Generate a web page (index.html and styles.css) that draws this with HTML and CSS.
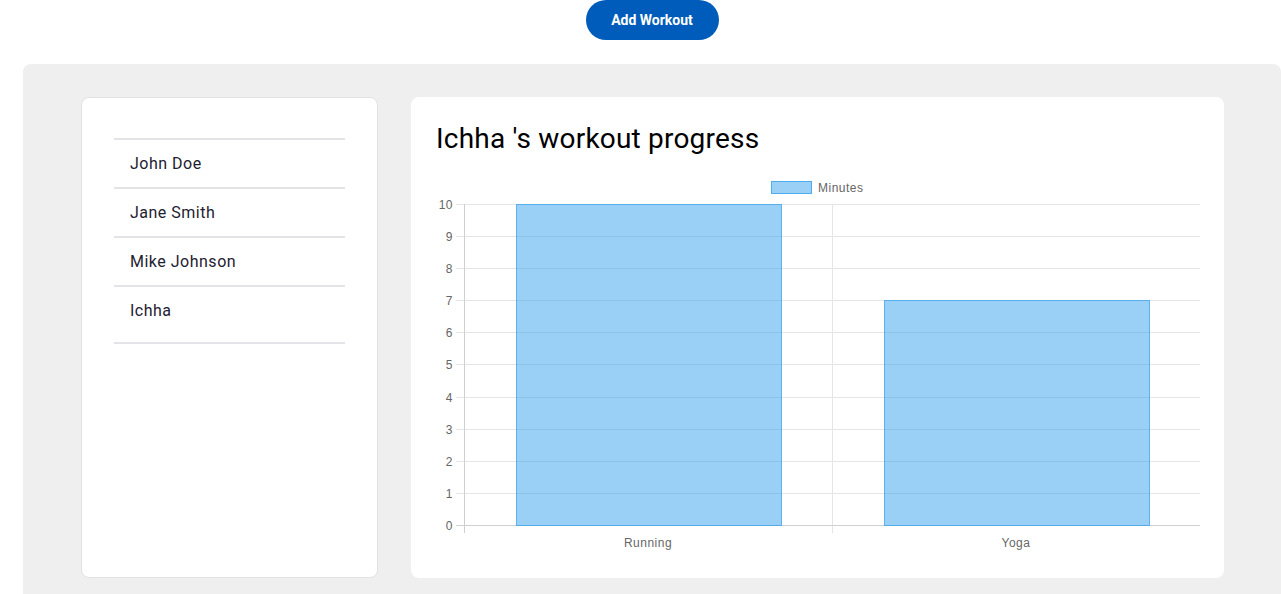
FILE: index.html
```html
<!DOCTYPE html>
<html lang="en">
<head>
<meta charset="utf-8">
<title>Workout Tracker</title>
<link rel="stylesheet" href="styles.css">
</head>
<body>
<div class="top">
  <button class="add-btn">Add Workout</button>
</div>
<main class="panel">
  <aside class="users">
    <ul class="user-list">
      <li>John Doe</li>
      <li>Jane Smith</li>
      <li>Mike Johnson</li>
      <li>Ichha</li>
    </ul>
  </aside>
  <section class="progress">
    <h2 class="title">Ichha 's workout progress</h2>
    <svg class="chart" width="764" height="380" viewBox="0 0 764 380" xmlns="http://www.w3.org/2000/svg">
      <!-- legend -->
      <rect x="335.5" y="6.5" width="40" height="12" fill="rgba(54,162,235,0.5)" stroke="rgba(54,162,235,0.85)" stroke-width="1"/>
      <text class="lbl" x="382" y="16.5">Minutes</text>
      <!-- horizontal grid -->
      <g stroke="#e5e5e5" stroke-width="1">
        <line x1="20" y1="29.5" x2="764" y2="29.5"/>
        <line x1="20" y1="61.5" x2="764" y2="61.5"/>
        <line x1="20" y1="93.5" x2="764" y2="93.5"/>
        <line x1="20" y1="125.5" x2="764" y2="125.5"/>
        <line x1="20" y1="157.5" x2="764" y2="157.5"/>
        <line x1="20" y1="189.5" x2="764" y2="189.5"/>
        <line x1="20" y1="222.5" x2="764" y2="222.5"/>
        <line x1="20" y1="254.5" x2="764" y2="254.5"/>
        <line x1="20" y1="286.5" x2="764" y2="286.5"/>
        <line x1="20" y1="318.5" x2="764" y2="318.5"/>
        <line x1="396.5" y1="29" x2="396.5" y2="358"/>
      </g>
      <g stroke="#cfcfcf" stroke-width="1">
        <line x1="20" y1="350.5" x2="764" y2="350.5"/>
        <line x1="28.5" y1="29" x2="28.5" y2="358"/>
      </g>
      <!-- y labels -->
      <g class="lbl" text-anchor="end">
        <text x="17" y="33.5">10</text>
        <text x="17" y="65.5">9</text>
        <text x="17" y="97.5">8</text>
        <text x="17" y="129.5">7</text>
        <text x="17" y="161.5">6</text>
        <text x="17" y="193.5">5</text>
        <text x="17" y="226.5">4</text>
        <text x="17" y="258.5">3</text>
        <text x="17" y="290.5">2</text>
        <text x="17" y="322.5">1</text>
        <text x="17" y="354.5">0</text>
      </g>
      <!-- bars -->
      <rect x="80.5" y="29.5" width="265" height="321" fill="rgba(54,162,235,0.5)" stroke="rgba(54,162,235,0.75)" stroke-width="1"/>
      <rect x="448.5" y="125.5" width="265" height="225" fill="rgba(54,162,235,0.5)" stroke="rgba(54,162,235,0.75)" stroke-width="1"/>
      <!-- x labels -->
      <g class="lbl" text-anchor="middle">
        <text x="212" y="372">Running</text>
        <text x="580" y="372">Yoga</text>
      </g>
    </svg>
  </section>
</main>
</body>
</html>
```

FILE: styles.css
```css
* { box-sizing: border-box; }

html, body {
  margin: 0;
  padding: 0;
  background: #ffffff;
  font-family: Roboto, "Noto Sans", Arial, sans-serif;
}

.top {
  margin-left: 23px;
  width: 1258px;
  display: flex;
  justify-content: center;
}

.add-btn {
  height: 40px;
  width: 133px;
  border: none;
  border-radius: 20px;
  background: #005cbb;
  color: #ffffff;
  font-family: Roboto, Arial, sans-serif;
  font-weight: 700;
  font-size: 14px;
  padding: 0;
  cursor: pointer;
}

.panel {
  margin: 24px 0 0 23px;
  width: 1258px;
  background: #efefef;
  border-radius: 8px;
  padding: 33px 57px 33px 58px;
  display: flex;
  gap: 33px;
  align-items: stretch;
}

.users {
  width: 297px;
  height: 481px;
  background: #ffffff;
  border: 1px solid #e2e2e2;
  border-radius: 8px;
  padding: 40px 32px 0 32px;
}

.user-list {
  list-style: none;
  margin: 0;
  padding: 0 0 8px 0;
  border-bottom: 2px solid #e4e4e8;
}

.user-list li {
  border-top: 2px solid #e4e4e8;
  padding: 11.5px 16px;
  font-size: 16px;
  line-height: 24px;
  letter-spacing: 0.5px;
  color: #1e2130;
}

.progress {
  width: 813px;
  height: 481px;
  background: #ffffff;
  border-radius: 8px;
  padding: 25px 24px 0 25px;
}

.title {
  margin: 0;
  font-size: 28px;
  font-weight: 400;
  line-height: 33px;
  letter-spacing: 0.2px;
  color: #000000;
}

.chart {
  display: block;
  margin-top: 20px;
}

.lbl {
  font-family: "Liberation Sans", Arial, sans-serif;
  font-size: 12px;
  letter-spacing: 0.5px;
  fill: #666666;
}
```
